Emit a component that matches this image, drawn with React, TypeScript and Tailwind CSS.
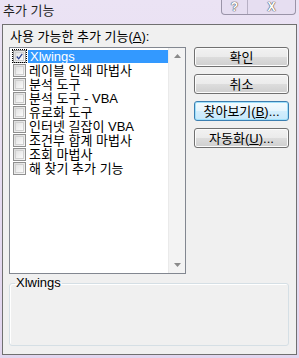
import React from 'react'

const font = { fontFamily: '"Liberation Sans", "Noto Sans CJK KR", sans-serif' }

const addins = [
  'Xlwings',
  '레이블 인쇄 마법사',
  '분석 도구',
  '분석 도구 - VBA',
  '유로화 도구',
  '인터넷 길잡이 VBA',
  '조건부 합계 마법사',
  '조회 마법사',
  '해 찾기 추가 기능',
]

const Check: React.FC<{ checked?: boolean }> = ({ checked }) => (
  <div className="w-[13px] h-[13px] shrink-0 border border-[#8f8f8f] bg-[linear-gradient(135deg,#dcdcdc,#f8f8f8)] p-[1px]">
    <div className="w-full h-full border border-[#d0d0d0] bg-[linear-gradient(135deg,#e2e2e2,#fbfbfb)] flex items-center justify-center">
      {checked && (
        <svg width="9" height="9" viewBox="0 0 9 9">
          <path d="M1 4.5 L3.5 7.5 L8 1" fill="none" stroke="#2a3f8f" strokeWidth="1.6" />
        </svg>
      )}
    </div>
  </div>
)

const DlgButton: React.FC<{ focused?: boolean; children: React.ReactNode }> = ({ focused, children }) => (
  <button
    className={
      focused
        ? 'w-[95px] h-[20px] rounded-[3px] border border-[#3c7fb1] bg-[linear-gradient(to_bottom,#f4fbfe_0%,#e6f5fd_50%,#d3eefd_50%,#c6e8fb_100%)] text-[13px] leading-none text-black shadow-[inset_0_0_0_1px_#9fe0fb]'
        : 'w-[95px] h-[20px] rounded-[3px] border border-[#707070] bg-[linear-gradient(to_bottom,#f2f2f2_0%,#ebebeb_50%,#dddddd_50%,#cfcfcf_100%)] text-[13px] leading-none text-black shadow-[inset_0_0_0_1px_#fcfcfc]'
    }
  >
    {children}
  </button>
)

export default function App() {
  return (
    <div
      style={font}
      className="w-[299px] h-[358px] flex flex-col bg-[linear-gradient(to_bottom,#ebe3f4,#e2d6ef)] text-black overflow-hidden"
    >
      {/* Title bar */}
      <div className="h-[24px] shrink-0 flex items-start justify-between">
        <div className="pl-[3px] pt-[3px] text-[13px] leading-[16px] text-[#1e1e1e]">추가 기능</div>
        <div className="flex mr-[3px] h-[15px] rounded-b-[4px] border border-t-0 border-[#9a94a8] bg-[#e6def1] overflow-hidden">
          <div className="w-[26px] flex items-center justify-center border-r border-[#b7b0c4] text-[12px] font-bold leading-none text-white [text-shadow:0_0_1px_#555,0_0_1px_#555,0_0_1px_#555]">
            ?
          </div>
          <div className="w-[47px] flex items-center justify-center text-[12px] font-bold leading-none text-white [text-shadow:0_0_1px_#555,0_0_1px_#555,0_0_1px_#555]">
            X
          </div>
        </div>
      </div>

      {/* Dialog body */}
      <div className="mx-[2px] mb-[3px] flex-1 border border-[#707070] bg-[#f0f0f0] px-[6px] flex flex-col">
        <div className="pt-[4px] pl-[1px] text-[13px] leading-[15px]">
          사용 가능한 추가 기능(<span className="underline">A</span>):
        </div>

        <div className="mt-[3px] flex">
          {/* list box */}
          <div className="w-[177px] h-[227px] border border-[#828790] bg-white flex">
            <div className="flex-1 pt-[1px] pl-[2px]">
              {addins.map((name, i) => (
                <div key={name} className="h-[14px] flex items-center">
                  <div
                    className={
                      i === 0
                        ? 'flex items-center h-[14px] pr-[1px] outline-1 outline-dotted outline-black -outline-offset-1 pl-[1px]'
                        : 'flex items-center h-[14px] pl-[1px]'
                    }
                  >
                    <Check checked={i === 0} />
                  </div>
                  <div
                    className={
                      i === 0
                        ? 'ml-[1px] flex-1 h-[13px] bg-[#3399ff] text-white text-[13px] leading-[13px] pl-[2px] whitespace-nowrap'
                        : 'ml-[1px] flex-1 text-[13px] leading-[13px] pl-[2px] whitespace-nowrap'
                    }
                  >
                    {name}
                  </div>
                </div>
              ))}
            </div>
            <div className="w-[17px] bg-[#f3f3f3] border-l border-[#eaeaea] flex flex-col justify-between items-center py-[6px]">
              <svg width="7" height="4" viewBox="0 0 7 4">
                <path d="M0 4 L3.5 0 L7 4 Z" fill="#8a8a8a" />
              </svg>
              <svg width="7" height="4" viewBox="0 0 7 4">
                <path d="M0 0 L3.5 4 L7 0 Z" fill="#8a8a8a" />
              </svg>
            </div>
          </div>

          {/* buttons */}
          <div className="ml-[8px] flex flex-col gap-[7px]">
            <DlgButton>확인</DlgButton>
            <DlgButton>취소</DlgButton>
            <DlgButton focused>
              찾아보기(<span className="underline">B</span>)...
            </DlgButton>
            <DlgButton>
              자동화(<span className="underline">U</span>)...
            </DlgButton>
          </div>
        </div>

        {/* description group */}
        <fieldset className="mt-[2px] w-[280px] h-[70px] rounded-[3px] border border-[#d5dfe5] shadow-[inset_1px_1px_0_#ffffff] px-[4px]">
          <legend className="text-[13px] leading-[14px] px-[1px] ml-[1px]">Xlwings</legend>
        </fieldset>
      </div>
    </div>
  )
}
